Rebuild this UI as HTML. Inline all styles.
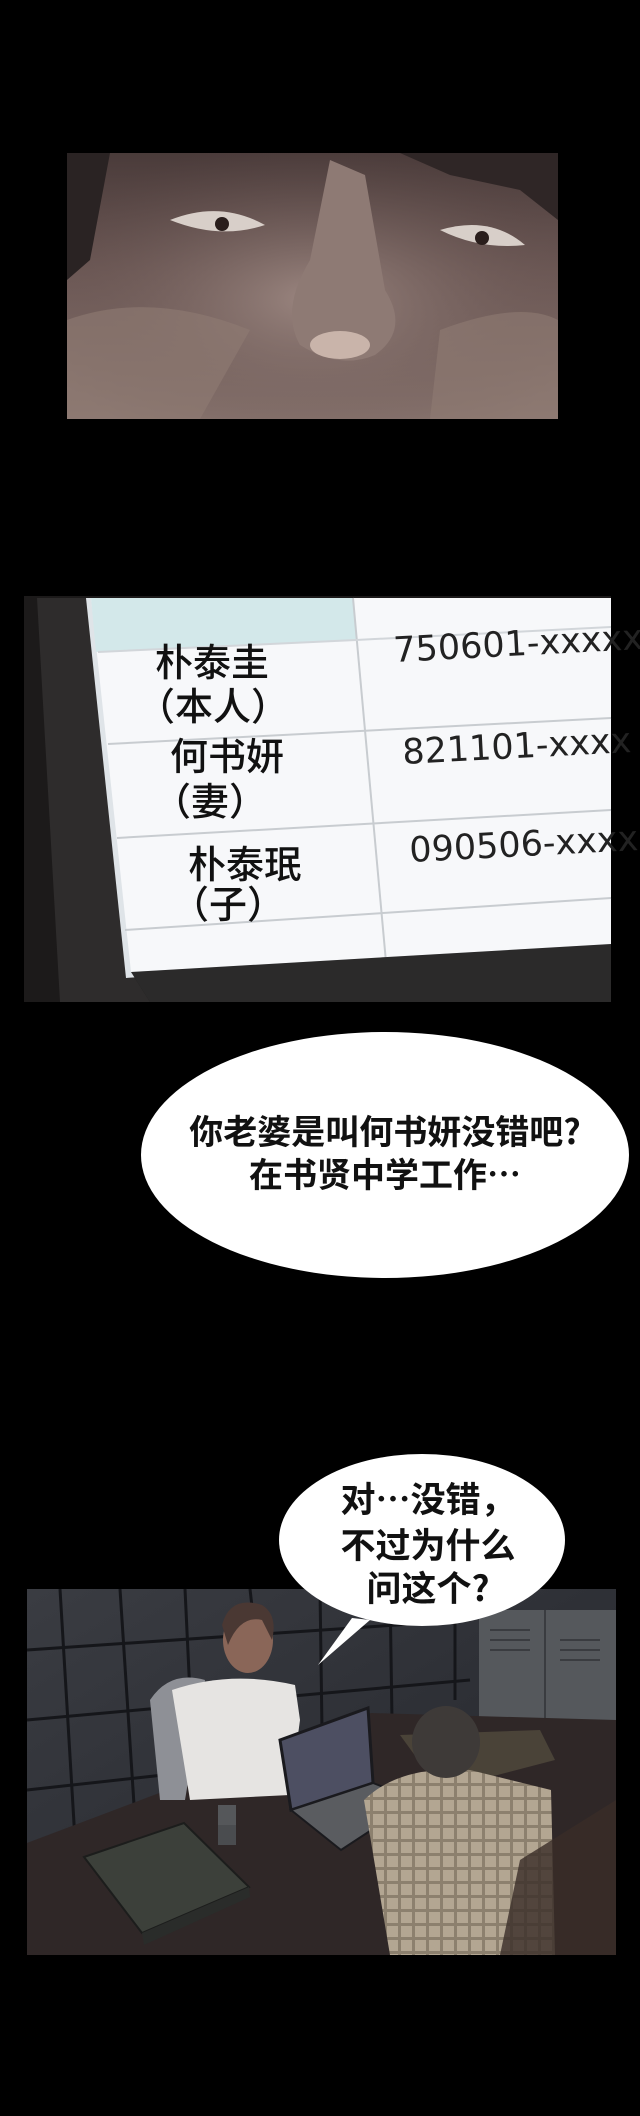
<!DOCTYPE html>
<html><head><meta charset="utf-8"><style>
html,body{margin:0;padding:0;background:#000;}
body{width:640px;height:2116px;position:relative;overflow:hidden;}
svg{position:absolute;left:0;top:0;}
.t{font-family:"Noto Sans CJK SC","Liberation Sans",sans-serif;fill:#111;font-weight:bold;}
.n{font-family:"DejaVu Sans","Liberation Sans",sans-serif;fill:#222;}
</style></head><body>
<svg width="640" height="2116" viewBox="0 0 640 2116" xmlns="http://www.w3.org/2000/svg">
<defs>
<linearGradient id="face" x1="0" y1="0" x2="0" y2="1">
<stop offset="0" stop-color="#4a3b3a"/><stop offset="0.45" stop-color="#6d5956"/><stop offset="1" stop-color="#8a7670"/>
</linearGradient>
<radialGradient id="glow" cx="0.5" cy="0.55" r="0.6">
<stop offset="0" stop-color="#9b8680"/><stop offset="1" stop-color="#5b4846" stop-opacity="0"/>
</radialGradient>
<linearGradient id="wall" x1="0" y1="0" x2="1" y2="1">
<stop offset="0" stop-color="#3a3c42"/><stop offset="1" stop-color="#22242a"/>
</linearGradient>
<pattern id="plaid" width="14" height="14" patternUnits="userSpaceOnUse">
<rect width="14" height="14" fill="#b3a692"/><rect x="0" y="5" width="14" height="3" fill="#8c806e"/><rect x="6" y="0" width="3" height="14" fill="#8c806e"/>
</pattern>
</defs>
<rect width="640" height="2116" fill="#000"/>

<!-- Panel 1: face -->
<rect x="67" y="153" width="491" height="266" fill="url(#face)"/>
<rect x="67" y="153" width="491" height="266" fill="url(#glow)"/>
<path d="M67 153 L110 153 L90 260 L67 280 Z" fill="#2a2323"/>
<path d="M400 153 L558 153 L558 220 L520 190 L450 175 Z" fill="#2f2626"/>
<path d="M170 220 Q220 200 265 225 Q220 240 170 220 Z" fill="#d8cfc9"/>
<circle cx="222" cy="224" r="7" fill="#2a1e1c"/>
<path d="M440 230 Q490 215 525 245 Q480 250 440 230 Z" fill="#d8cfc9"/>
<circle cx="482" cy="238" r="7" fill="#2a1e1c"/>
<path d="M330 160 L310 260 Q280 310 300 345 Q340 370 375 355 Q410 330 385 290 L365 175 Z" fill="#8e7a74"/>
<ellipse cx="340" cy="345" rx="30" ry="14" fill="#c9b4aa"/>
<path d="M67 320 Q150 290 250 330 L200 419 L67 419 Z" fill="#8f7b73" opacity="0.6"/>
<path d="M440 330 Q520 300 558 320 L558 419 L430 419 Z" fill="#8f7b73" opacity="0.6"/>

<!-- Panel 2: monitor -->
<rect x="24" y="596" width="587" height="406" fill="#1c1a1a"/>
<path d="M37 598 L91 598 L131 972 L150 1002 L60 1002 Z" fill="#2e2c2c"/>
<path d="M86 598 L611 598 L611 946 L126 978 Z" fill="#dfe4e8"/>
<path d="M91 598 L611 598 L611 944 L131 972 Z" fill="#f7f8fa"/>
<path d="M91 598 L353 598 L356 640 L96 652 Z" fill="#d3e8ea"/>
<path d="M353 598 L386 962" stroke="#c8ccd0" stroke-width="2"/>
<path d="M98 652 L356 640 L611 627" stroke="#d2d6da" stroke-width="2" fill="none"/>
<path d="M108 744 L611 718" stroke="#c8ccd0" stroke-width="2"/>
<path d="M117 838 L611 810" stroke="#c8ccd0" stroke-width="2"/>
<path d="M125 930 L611 898" stroke="#c8ccd0" stroke-width="2"/>
<path d="M131 972 L611 944 L611 1002 L150 1002 Z" fill="#2b2a2a"/>
<g class="t" style="font-weight:500">
<text class="t" font-size="38" x="155" y="676" style="font-weight:500">朴泰圭</text>
<text class="t" font-size="38" x="137" y="720" style="font-weight:500">（本人）</text>
<text class="t" font-size="38" x="170" y="770" style="font-weight:500">何书妍</text>
<text class="t" font-size="38" x="153" y="815" style="font-weight:500">（妻）</text>
<text class="t" font-size="38" x="188" y="878" style="font-weight:500">朴泰珉</text>
<text class="t" font-size="38" x="171" y="918" style="font-weight:500">（子）</text>
</g>
<text class="n" font-size="35" x="394" y="662" transform="rotate(-3 394 662)">750601-xxxxx</text>
<text class="n" font-size="35" x="403" y="764" transform="rotate(-3 403 764)">821101-xxxx</text>
<text class="n" font-size="35" x="410" y="862" transform="rotate(-3 410 862)">090506-xxxx</text>

<!-- Bubble 1 -->
<ellipse cx="385" cy="1155" rx="244" ry="123" fill="#fff"/>
<text class="t" font-size="34" x="385" y="1144" text-anchor="middle">你老婆是叫何书妍没错吧?</text>
<text class="t" font-size="34" x="385" y="1187" text-anchor="middle">在书贤中学工作⋯</text>

<!-- Panel 3 -->
<rect x="27" y="1589" width="589" height="366" fill="url(#wall)"/>
<g stroke="#15161a" stroke-width="3" fill="none">
<path d="M27 1650 L470 1620"/><path d="M27 1720 L470 1680"/><path d="M27 1790 L300 1760"/>
<path d="M60 1589 L75 1840"/><path d="M120 1589 L135 1820"/><path d="M185 1589 L195 1800"/>
<path d="M250 1589 L258 1660"/><path d="M320 1589 L322 1730"/><path d="M390 1589 L392 1720"/><path d="M455 1589 L455 1700"/>
</g>
<rect x="479" y="1610" width="137" height="127" fill="#55585c"/>
<g stroke="#3a3c40" stroke-width="2"><path d="M490 1630 L530 1630 M490 1640 L530 1640 M490 1650 L530 1650 M560 1640 L600 1640 M560 1650 L600 1650 M560 1660 L600 1660"/><path d="M545 1610 L545 1737"/></g>
<path d="M27 1843 L371 1713 L616 1720 L616 1955 L27 1955 Z" fill="#2f2727"/>
<path d="M400 1735 L540 1730 L555 1760 L440 1790 Z" fill="#4a4338"/>
<path d="M150 1700 Q170 1670 205 1680 L185 1800 L160 1800 Z" fill="#8e9096"/>
<path d="M172 1690 Q230 1670 295 1685 L300 1720 L290 1795 L190 1800 Z" fill="#e6e4e2"/>
<ellipse cx="248" cy="1640" rx="25" ry="33" fill="#8a6658"/>
<path d="M222 1625 Q230 1595 262 1605 Q278 1615 272 1640 L262 1620 Q240 1615 228 1645 Z" fill="#4a3833"/>
<rect x="218" y="1805" width="18" height="20" fill="#55575a"/><rect x="218" y="1825" width="18" height="20" fill="#4a4c4f"/>
<path d="M84 1857 L184 1823 L249 1887 L142 1933 Z" fill="#3c403a" stroke="#1c1d1c" stroke-width="2"/>
<path d="M142 1933 L249 1887 L250 1897 L144 1945 Z" fill="#2a2c2a"/>
<path d="M280 1740 L368 1708 L373 1783 L291 1810 Z" fill="#4d4f62" stroke="#1a1a1e" stroke-width="3"/>
<path d="M291 1810 L373 1783 L417 1800 L341 1850 Z" fill="#5a5c60" stroke="#1a1a1e" stroke-width="2"/>
<path d="M364 1800 Q400 1765 470 1770 L551 1790 L555 1955 L390 1955 Z" fill="url(#plaid)"/>
<ellipse cx="446" cy="1742" rx="34" ry="36" fill="#3e3a38"/>
<path d="M520 1860 L616 1800 L616 1955 L500 1955 Z" fill="#3a2d28" opacity="0.8"/>

<!-- Bubble 2 -->
<path d="M318 1665 L352 1618 L370 1620 Z" fill="#fff"/>
<ellipse cx="422" cy="1540" rx="143" ry="86" fill="#fff"/>
<text class="t" font-size="35" x="428" y="1512" text-anchor="middle">对⋯没错，</text>
<text class="t" font-size="35" x="428" y="1558" text-anchor="middle">不过为什么</text>
<text class="t" font-size="35" x="428" y="1601" text-anchor="middle">问这个?</text>
</svg>
</body></html>
